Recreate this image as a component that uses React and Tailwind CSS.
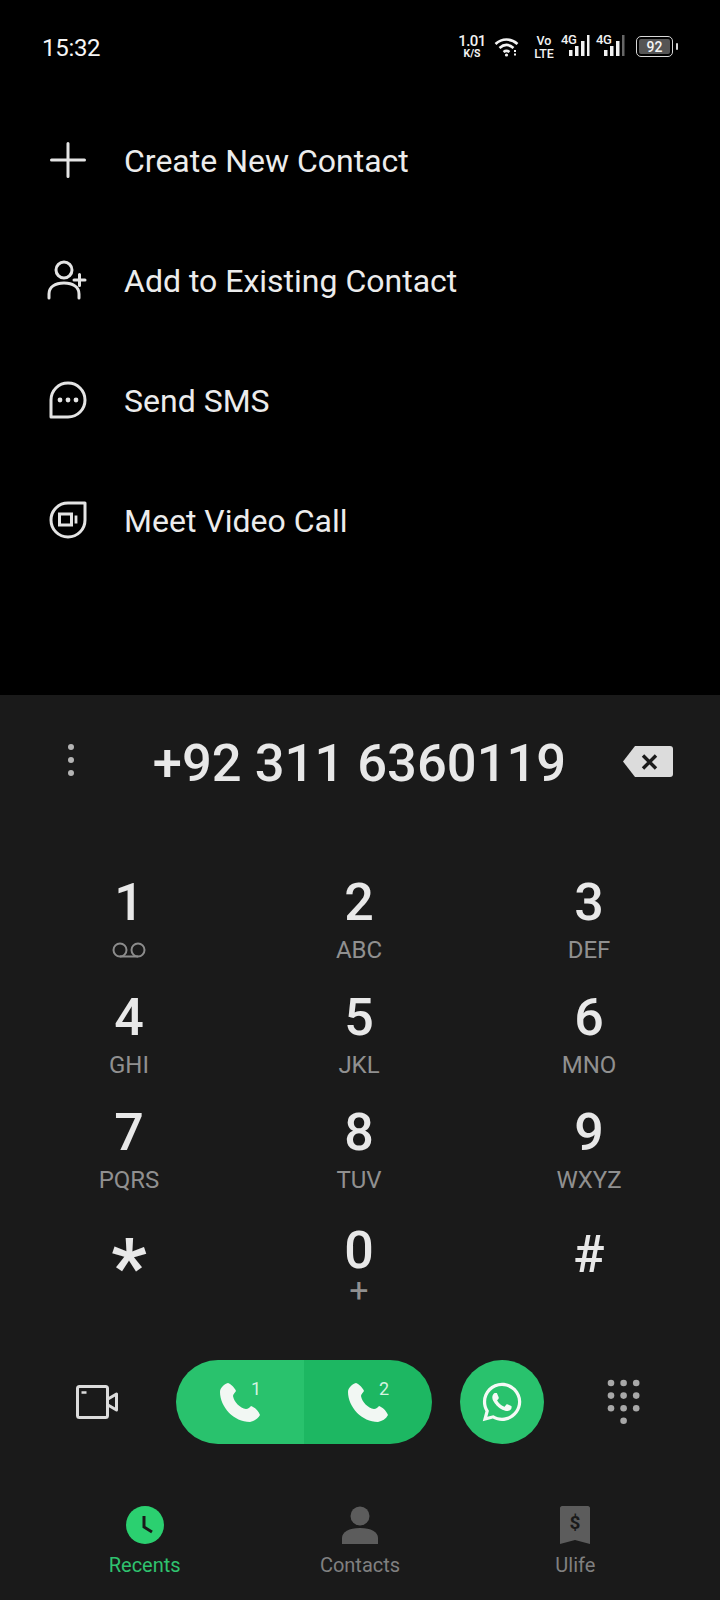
import React from "react";
import { FaWhatsapp } from "react-icons/fa";

const Bars = ({ dim }) => (
  <svg width="22" height="22" viewBox="0 0 22 22" className="block">
    <rect x="0" y="15" width="3.500" height="6" fill="#f2f2f2" />
    <rect x="6" y="11" width="3.500" height="10" fill="#f2f2f2" />
    <rect x="12" y="6" width="3.500" height="15" fill="#f2f2f2" />
    <rect x="18" y="0" width="2.500" height="21" fill={dim ? "#666" : "#f2f2f2"} />
  </svg>
);

const Net = ({ dim }) => (
  <div className="relative w-[29px] h-[22px]">
    <span className="absolute left-0 -top-[2px] text-[13px] leading-[14px] font-medium tracking-[-0.5px] text-[#f2f2f2]">4G</span>
    <div className="absolute left-[8px] top-0"><Bars dim={dim} /></div>
  </div>
);

const MenuRow = ({ icon, label }) => (
  <div className="h-[120px] flex items-center pl-[47px]">
    <div className="w-[42px] h-[42px] flex items-center justify-center">{icon}</div>
    <span className="ml-[35px] text-[32px] leading-none text-[#ececec] mt-[2px]">{label}</span>
  </div>
);

const Voicemail = () => (
  <svg width="36" height="18" viewBox="0 0 36 18" fill="none" stroke="#8c8c8c" strokeWidth="2">
    <circle cx="9" cy="9" r="6.500" />
    <circle cx="27" cy="9" r="6.500" />
    <path d="M9 15.500h18" />
  </svg>
);

const Key = ({ d, s, digit = "h-[64px] leading-[64px] text-[52px] font-medium", sub = "h-[30px] leading-[30px] text-[24px]" }) => (
  <div className="h-[115px] flex flex-col items-center">
    <div className={`text-[#e8e8e8] ${digit}`}>{d}</div>
    <div className={`text-[#909090] flex items-center ${sub}`}>{s}</div>
  </div>
);

const Phone = () => (
  <svg width="40" height="40" viewBox="0 0 40 40" fill="#f2f7f3">
    <path d="M8 1C11 2 15 6 16 9C15 11 13 12 13 14C14 20 20 26 26 27C28 27 30 25 31 24C34 25 38 28 40 33C38 37 34 39 30 40C14 40 0 25 0 10C0 6 4 2 8 1Z" />
  </svg>
);

export default function App() {
  const dots = [];
  for (let r = 0; r < 3; r++) for (let c = 0; c < 3; c++) dots.push(<circle key={`${r}${c}`} cx={5 + c * 12.6} cy={5 + r * 12.6} r="3.300" fill="#a8a8a8" />);
  return (
    <div className="w-[720px] h-[1600px] bg-black flex flex-col font-['Roboto',sans-serif] overflow-hidden">
      <div className="h-[100px] flex items-start justify-between pl-[42px] pr-[42px] pt-[35px]">
        <span className="text-[24px] leading-[26px] tracking-[-0.3px] text-[#f5f5f5]">15:32</span>
        <div className="flex items-start text-[#f2f2f2] mt-[-1px]">
          <div className="w-[28px] mr-[8px] flex flex-col items-center font-medium">
            <span className="text-[15px] leading-[14px] tracking-[-0.5px]">1.01</span>
            <span className="text-[10.500px] leading-[11px] font-bold">K/S</span>
          </div>
          <svg width="26" height="20" viewBox="0 0 26 20" fill="none" stroke="#f2f2f2" strokeWidth="2.600" className="mt-[3px] mr-[13px]">
            <path d="M1.500 7C8 1 17 1 23.500 7" />
            <path d="M5.500 11C10 7 15 7 19.500 11" />
            <path d="M9.500 15C11.500 13.500 13.500 13.500 15.500 15" />
            <circle cx="12.500" cy="18" r="1.600" fill="#f2f2f2" stroke="none" />
            <path d="M21 13v6" strokeWidth="2" strokeDasharray="2 1.500" />
          </svg>
          <div className="w-[22px] mr-[6px] flex flex-col items-center font-medium">
            <span className="text-[12.500px] leading-[12px] mt-[1px]">Vo</span>
            <span className="text-[12.500px] leading-[12px] mt-[1px] tracking-[-0.2px]">LTE</span>
          </div>
          <div className="mr-[6px] mt-[1px]"><Net /></div>
          <div className="mr-[11px] mt-[1px]"><Net dim /></div>
          <div className="w-[37px] h-[21px] mt-[2px] border-[1.500px] border-[#d8d8d8] rounded-[5px] p-[2px]">
            <div className="h-full w-full bg-[#555] rounded-[2px] flex items-center justify-center text-[14px] font-medium text-[#f5f5f5] leading-none">92</div>
          </div>
          <div className="w-[2px] h-[7px] ml-[3px] mt-[9px] bg-[#d8d8d8] rounded-[1px]" />
        </div>
      </div>

      <div className="h-[595px]">
        <MenuRow label="Create New Contact" icon={
          <svg width="36" height="36" viewBox="0 0 36 36" stroke="#e4e4e4" strokeWidth="3" strokeLinecap="round"><path d="M18 1.500v33M1.500 18h33" /></svg>
        } />
        <MenuRow label="Add to Existing Contact" icon={
          <svg width="42" height="40" viewBox="0 0 42 40" fill="none" stroke="#e4e4e4" strokeWidth="3" strokeLinecap="round">
            <circle cx="17" cy="10" r="8" />
            <path d="M2 38v-4C2 27 8 23 17 23s15 4 15 11v4" />
            <path d="M27 20h11M32.500 14.500v11" strokeWidth="3" />
          </svg>
        } />
        <MenuRow label="Send SMS" icon={
          <svg width="38" height="38" viewBox="0 0 38 38" fill="none" stroke="#e4e4e4" strokeWidth="3">
            <path d="M2 36V19C2 9.500 9.500 2 19 2s17 7.500 17 17-7.500 17-17 17Z" strokeLinejoin="round" />
            <circle cx="11" cy="19" r="2.400" fill="#e4e4e4" stroke="none" />
            <circle cx="19" cy="19" r="2.400" fill="#e4e4e4" stroke="none" />
            <circle cx="27" cy="19" r="2.400" fill="#e4e4e4" stroke="none" />
          </svg>
        } />
        <MenuRow label="Meet Video Call" icon={
          <svg width="38" height="38" viewBox="0 0 38 38" fill="none" stroke="#e4e4e4" strokeWidth="3">
            <path d="M36 2V19C36 28.500 28.500 36 19 36S2 28.500 2 19 9.500 2 19 2Z" strokeLinejoin="round" />
            <rect x="10.500" y="13" width="12" height="11" />
            <path d="M27 14.500v8" strokeWidth="2.800" />
          </svg>
        } />
      </div>

      <div className="flex-1 bg-[#1a1a1a] flex flex-col">
        <div className="h-[132px] flex items-center justify-between pl-[67px] pr-[46px]">
          <svg width="8" height="34" viewBox="0 0 8 34" fill="#b4b4b4" className="mb-[2px]">
            <circle cx="4" cy="4" r="3" /><circle cx="4" cy="17" r="3" /><circle cx="4" cy="30" r="3" />
          </svg>
          <span className="text-[52.500px] leading-none font-medium text-[#e8e8e8] ml-[22px] mt-[5px]">+92 311 6360119</span>
          <svg width="52" height="33" viewBox="0 0 52 33">
            <path d="M13 1H48C50 1 51 2 51 4V29C51 31 50 32 48 32H13L1 16.500Z" fill="#dcdcdc" />
            <path d="M21 10.500L34 23.500M34 10.500L21 23.500" stroke="#1a1a1a" strokeWidth="3.400" />
          </svg>
        </div>

        <div className="mt-[44px] pl-[14px] pr-[16px] grid grid-cols-3">
          <Key d="1" s={<Voicemail />} />
          <Key d="2" s="ABC" />
          <Key d="3" s="DEF" />
          <Key d="4" s="GHI" />
          <Key d="5" s="JKL" />
          <Key d="6" s="MNO" />
          <Key d="7" s="PQRS" />
          <Key d="8" s="TUV" />
          <Key d="9" s="WXYZ" />
          <Key d="*" digit="mt-[20px] h-[64px] leading-[64px] text-[78px] font-bold" />
          <Key d="0" s="+" digit="mt-[7px] h-[56px] leading-[56px] text-[52px] font-medium" sub="h-[22px] leading-[22px] text-[34px]" />
          <Key d="#" digit="mt-[7px] h-[64px] leading-[64px] text-[52px] font-medium" />
        </div>

        <div className="mt-[29px] h-[84px] flex items-center">
          <svg width="43" height="34" viewBox="0 0 43 34" fill="none" stroke="#dcdcdc" strokeWidth="3" className="ml-[76px]">
            <rect x="1.500" y="1.500" width="30" height="31" rx="2" />
            <path d="M5.500 7.500h5" strokeWidth="2.500" />
            <path d="M32 14L40.500 9V25L32 20" strokeLinejoin="round" />
          </svg>
          <div className="ml-[57px] w-[256px] h-[84px] rounded-full overflow-hidden flex">
            <div className="w-[128px] bg-[#29c26d] relative pl-[44px] pt-[22px]">
              <Phone />
              <span className="absolute left-[75px] top-[18px] text-[18px] leading-[22px] text-[#d5f3e0]">1</span>
            </div>
            <div className="w-[128px] bg-[#1db762] relative pl-[44px] pt-[22px]">
              <Phone />
              <span className="absolute left-[75px] top-[18px] text-[18px] leading-[22px] text-[#d5f3e0]">2</span>
            </div>
          </div>
          <div className="ml-[28px] w-[84px] h-[84px] rounded-full bg-[#29c26d] flex items-center justify-center">
            <FaWhatsapp size={44} color="#f5f9f6" />
          </div>
          <svg width="36" height="48" viewBox="0 0 36 48" className="ml-[62px]">
            {dots}
            <circle cx="17.600" cy="42.800" r="3.300" fill="#a8a8a8" />
          </svg>
        </div>

        <div className="mt-[62px] px-[37px] grid grid-cols-3">
          <div className="flex flex-col items-center">
            <svg width="38" height="38" viewBox="0 0 38 38">
              <circle cx="19" cy="19" r="19" fill="#2bd070" />
              <path d="M18 10V21L26 26" fill="none" stroke="#1a1a1a" strokeWidth="3" />
            </svg>
            <span className="mt-[8px] text-[20px] leading-[26px] text-[#2fc36f]">Recents</span>
          </div>
          <div className="flex flex-col items-center">
            <svg width="38" height="38" viewBox="0 0 38 38" fill="#5c5c5c">
              <circle cx="19" cy="10" r="9.500" />
              <path d="M1 38V32C1 26 8 22 19 22S37 26 37 32V38Z" />
            </svg>
            <span className="mt-[8px] text-[20px] leading-[26px] text-[#808080]">Contacts</span>
          </div>
          <div className="flex flex-col items-center">
            <svg width="30" height="38" viewBox="0 0 30 38">
              <path d="M2 0H28C29 0 30 1 30 2V38L15 34L0 38V2C0 1 1 0 2 0Z" fill="#5c5c5c" />
              <text x="15" y="23" textAnchor="middle" fontSize="19" fontWeight="700" fill="#1a1a1a" fontFamily="Roboto">$</text>
            </svg>
            <span className="mt-[8px] text-[20px] leading-[26px] text-[#808080]">Ulife</span>
          </div>
        </div>
      </div>
    </div>
  );
}
